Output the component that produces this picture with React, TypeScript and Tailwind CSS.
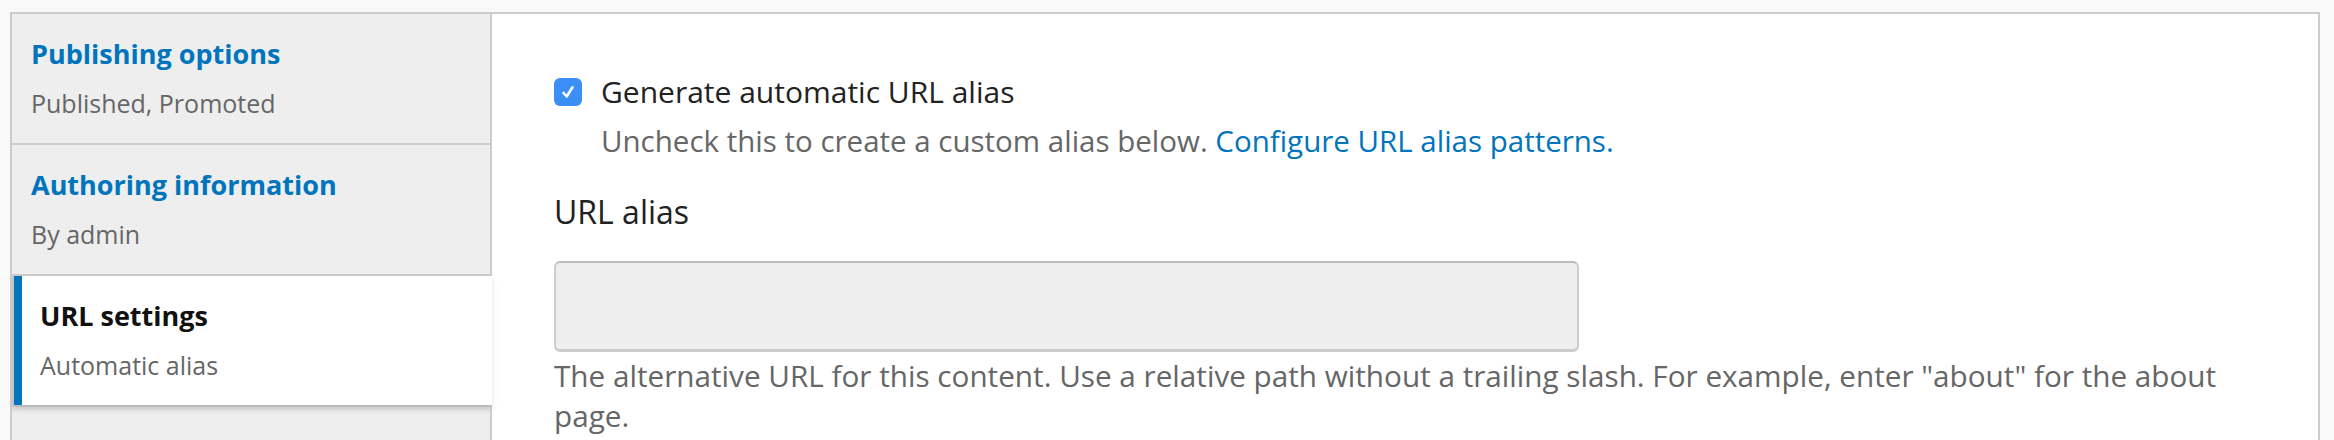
import React from "react";

type TabProps = {
  title: string;
  summary?: string;
};

function Tab({ title, summary }: TabProps) {
  return (
    <div className="border-r-2 border-b-2 border-[#ccc] pl-[19px] pt-[20px] pb-[20px]">
      <p className="text-[27px] leading-[39px] font-bold text-[#0074bd]">
        {title}
      </p>
      <p className="mt-[11px] text-[25px] leading-[39px] text-[#666]">
        {summary}
      </p>
    </div>
  );
}

function ActiveTab({ title, summary }: TabProps) {
  return (
    <div className="relative z-10 bg-[#ccc] pl-[2px]">
      <div className="bg-white border-l-8 border-[#0074bd] pl-[18px] pt-[20px] pb-[20px] shadow-[0_3px_6px_rgba(0,0,0,0.12)]">
        <p className="text-[27px] leading-[39px] font-bold text-[#111]">
          {title}
        </p>
        <p className="mt-[11px] text-[25px] leading-[39px] text-[#666]">
          {summary}
        </p>
      </div>
    </div>
  );
}

function Checkbox() {
  return (
    <span className="flex size-[28px] shrink-0 items-center justify-center rounded-[6px] bg-[#3b8ef5]">
      <svg width="18" height="18" viewBox="0 0 16 16" fill="none">
        <path
          d="M4 8.8 L6.9 12 L12 3.8"
          stroke="white"
          strokeWidth="2.3"
          strokeLinecap="round"
          strokeLinejoin="round"
        />
      </svg>
    </span>
  );
}

export default function App() {
  return (
    <div className="min-h-[440px] bg-[#f9f9f9] pt-[12px] pl-[10px] pr-[14px] font-['Open_Sans',sans-serif]">
      <div className="flex h-[460px] border-2 border-[#ccc] bg-white">
        <div className="w-[480px] shrink-0 bg-[#eee] flex flex-col">
          <Tab title="Publishing options" summary="Published, Promoted" />
          <Tab title="Authoring information" summary="By admin" />
          <ActiveTab title="URL settings" summary="Automatic alias" />
          <div className="flex-1 border-r-2 border-t-2 border-[#ccc] pl-[19px] pt-[25px] shadow-[inset_0_6px_6px_-4px_rgba(0,0,0,0.1)]">
            <p className="text-[27px] leading-[39px] font-bold text-[#0074bd]">
              Menu settings
            </p>
          </div>
        </div>

        <div className="flex-1 bg-white pl-[62px] pr-[62px] pt-[58px]">
          <div className="flex h-[40px] items-center gap-[19px]">
            <Checkbox />
            <span className="text-[30px] leading-[40px] text-[#222]">
              Generate automatic URL alias
            </span>
          </div>
          <p className="mt-[9px] pl-[47px] text-[29.5px] leading-[40px] text-[#666]">
            Uncheck this to create a custom alias below.{" "}
            <a className="text-[#0074bd]">Configure URL alias patterns.</a>
          </p>

          <label className="mt-[27px] block text-[32px] leading-[48px] text-[#222]">
            URL alias
          </label>
          <div className="mt-[25px] h-[91px] w-[1025px] rounded-[6px] border-2 border-b-[3px] border-[#ccc] border-t-[#bbb] bg-[#eee]" />
          <p className="mt-[4px] text-[29.7px] leading-[40px] text-[#666]">
            The alternative URL for this content. Use a relative path without a
            trailing slash. For example, enter "about" for the about page.
          </p>
        </div>
      </div>
    </div>
  );
}
